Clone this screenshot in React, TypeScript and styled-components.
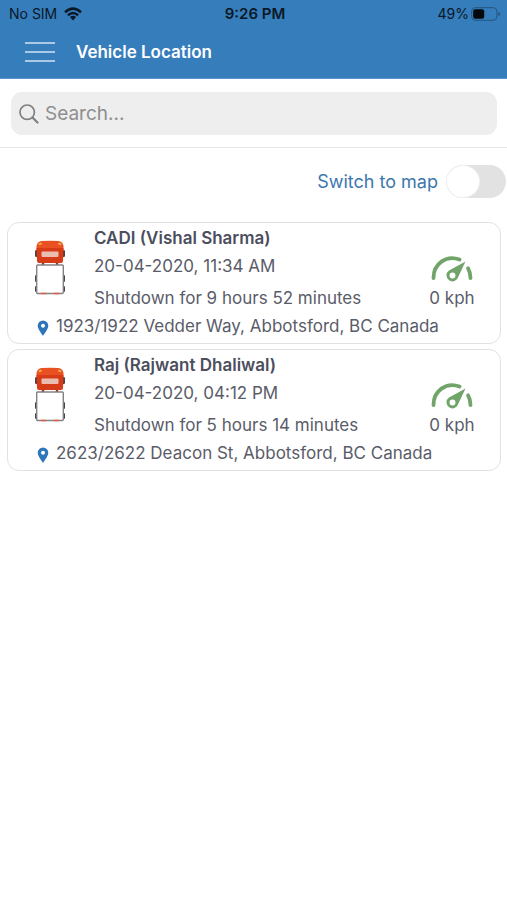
import React, { useState } from "react";
import styled, { createGlobalStyle } from "styled-components";

const GlobalStyle = createGlobalStyle`
  *, *::before, *::after { box-sizing: border-box; }
  body {
    margin: 0;
    background: #ffffff;
    color: #5a5c69;
    font-family: Inter, "Liberation Sans", sans-serif;
    font-size: 17px;
  }
`;

const Header = styled.header`
  background: #367dbc;
  padding-bottom: 3px;
  border-bottom: 1px solid #5b96cb;
`;

const StatusBar = styled.div`
  display: grid;
  grid-template-columns: 1fr auto 1fr;
  align-items: center;
  height: 28px;
  padding: 0 6px 0 9px;
  color: #0b1826;
  font-size: 14px;
  line-height: 20px;
`;

const StatusGroup = styled.div<{ $end?: boolean }>`
  display: flex;
  align-items: center;
  justify-content: ${(p) => (p.$end ? "flex-end" : "flex-start")};
  gap: ${(p) => (p.$end ? 2 : 7)}px;
`;

const Clock = styled.time`
  font-size: 15px;
  font-weight: 600;
`;

const NavBar = styled.div`
  display: flex;
  align-items: center;
  gap: 20px;
  height: 47px;
  padding: 0 24px;
`;

const MenuButton = styled.button`
  display: flex;
  padding: 0;
  border: 0;
  background: none;
  cursor: pointer;
`;

const Title = styled.h1`
  margin: 0;
  color: #ffffff;
  font-size: 17px;
  font-weight: 600;
  line-height: 24px;
`;

const SearchArea = styled.div`
  padding: 13px 10px 12px 11px;
  border-bottom: 1px solid #e6e6e6;
`;

const SearchBox = styled.label`
  display: flex;
  align-items: center;
  gap: 6px;
  height: 43px;
  padding: 0 8px;
  border-radius: 11px;
  background: #eeeeee;
`;

const SearchInput = styled.input`
  flex: 1;
  min-width: 0;
  padding: 0;
  border: 0;
  outline: 0;
  background: none;
  color: #5a5c69;
  font: inherit;
  font-size: 19px;
  line-height: 24px;
  &::placeholder { color: #8e8e90; opacity: 1; }
`;

const SwitchRow = styled.label`
  display: flex;
  align-items: center;
  justify-content: flex-end;
  gap: 8px;
  padding: 17px 1px 24px;
  color: #3c78ad;
  font-size: 18px;
  line-height: 24px;
`;

const Switch = styled.input`
  appearance: none;
  display: flex;
  width: 60px;
  height: 33px;
  margin: 0;
  padding: 1px;
  border-radius: 17px;
  background: #e2e2e2;
  cursor: pointer;
  &::before {
    content: "";
    width: 32px;
    border-radius: 50%;
    background: #ffffff;
    box-shadow: 0 0 0 1px #f1f1f1;
  }
  &:checked { background: #367dbc; justify-content: flex-end; }
`;

const VehicleList = styled.ul`
  display: flex;
  flex-direction: column;
  gap: 5px;
  margin: 0;
  padding: 0 6px 0 7px;
  list-style: none;
`;

const Card = styled.li`
  padding: 1px 0 3px;
  border: 1px solid #e2e2e4;
  border-radius: 12px;
  line-height: 28px;
`;

const Summary = styled.div`
  display: grid;
  grid-template-columns: 86px 1fr 96px;
`;

const TruckCell = styled.div`
  display: flex;
  align-items: center;
  justify-content: center;
  padding: 0 2px 2px 0;
`;

const Details = styled.div`
  display: flex;
  flex-direction: column;
`;

const Name = styled.strong`
  color: #4c4e5e;
  font-weight: 600;
`;

const State = styled.span`
  margin-top: 4px;
`;

const Speed = styled.div`
  display: flex;
  flex-direction: column;
  align-items: center;
  justify-content: flex-end;
  gap: 2px;
`;

const Address = styled.div`
  display: flex;
  align-items: center;
  gap: 7px;
  padding-left: 29px;
`;

const Pin = styled.svg`
  flex: none;
  margin-top: 3px;
`;

const WifiIcon = () => (
  <svg width="18" height="14" viewBox="0 0 18 14" aria-hidden="true">
    <g fill="none" stroke="#0b1826" strokeWidth="2.5">
      <path d="M1 5.2Q9-2 17 5.2" />
      <path d="M3.9 8.3Q9 3.8 14.1 8.3" />
    </g>
    <path d="M5.9 10.1Q9 7.6 12.1 10.1L9 13.5Z" fill="#0b1826" />
  </svg>
);

const BatteryIcon = () => (
  <svg width="30" height="14" viewBox="0 0 30 14" aria-hidden="true">
    <rect x="0.7" y="0.7" width="25.2" height="12.6" rx="3.5" fill="none" stroke="#24567f" />
    <rect x="2.2" y="2.2" width="11" height="9.6" rx="2" fill="#03080d" />
    <path d="M27.3 4.7Q29.3 5.4 29.3 7T27.3 9.3Z" fill="#24567f" />
  </svg>
);

const MenuIcon = () => (
  <svg width="32" height="22" viewBox="0 0 32 22" aria-hidden="true">
    <path d="M1 2H31M1 11H31M1 20H31" stroke="#cfe2f3" strokeWidth="1.6" />
  </svg>
);

const SearchIcon = () => (
  <svg width="20" height="20" viewBox="0 0 20 20" aria-hidden="true">
    <g fill="none" stroke="#808082" strokeLinecap="round">
      <circle cx="8.2" cy="8.2" r="7.2" strokeWidth="1.7" />
      <path d="M13.5 13.5L18.5 18.5" strokeWidth="2.2" />
    </g>
  </svg>
);

const TruckIcon = () => (
  <svg width="32" height="56" viewBox="0 0 32 56" aria-hidden="true">
    <g fill="#4a4443">
      <rect x="1" y="11" width="3" height="7" rx="1.2" />
      <rect x="28" y="11" width="3" height="7" rx="1.2" />
      <rect x="1" y="36" width="3" height="7" rx="1.2" />
      <rect x="28" y="36" width="3" height="7" rx="1.2" />
      <rect x="1" y="47" width="3" height="6" rx="1.2" />
      <rect x="28" y="47" width="3" height="6" rx="1.2" />
    </g>
    <path d="M9 23V26M23 23V26" stroke="#8e3a2c" strokeWidth="2.4" />
    <path d="M2.5 12V7Q3.5 2.4 7.5 2.1Q16 1.5 24.5 2.1Q28.500 2.4 29.500 7V12Z" fill="#e95123" />
    <path d="M2.5 9H29.5L29 22Q29 24 27 24H5Q3 24 3 22Z" fill="#d63c18" />
    <path d="M5.500 5.200L7 4.600M26.500 5.200L25 4.600" stroke="#f9a744" strokeWidth="2" strokeLinecap="round" />
    <rect x="7.500" y="12.500" width="17" height="5.500" rx="1" fill="#ebbdb0" />
    <rect x="2.700" y="26" width="26.600" height="28.500" rx="1" fill="#ffffff" stroke="#858180" strokeWidth="1.400" />
    <path d="M7 54.500H12M20 54.500H25" stroke="#e65b49" strokeWidth="1.600" />
  </svg>
);

const GaugeIcon = () => (
  <svg width="42" height="26" viewBox="0 0 42 26" aria-hidden="true">
    <g fill="none" stroke="#70a468" strokeWidth="3.800" strokeLinecap="round">
      <path d="M2.500 22C2.500 8 15-1.500 28.500 3.500" />
      <path d="M37 12.300Q39.500 16.500 39.500 22" />
    </g>
    <path
      d="M34.500 5.500L27.300 20.800A6 6 0 1 1 18 14.500ZM21.500 16.500A3 3 0 1 0 21.500 22.500A3 3 0 1 0 21.500 16.500Z"
      fill="#70a468"
      fillRule="evenodd"
    />
  </svg>
);

const PinIcon = () => (
  <Pin width="12" height="16" viewBox="0 0 12 16" aria-hidden="true">
    <path
      d="M6 0.500A5.300 5.300 0 0 0 0.700 5.800C0.700 9.500 6 15.700 6 15.700S11.300 9.500 11.300 5.800A5.300 5.300 0 0 0 6 0.500ZM6 3.800A2 2 0 1 1 6 7.800A2 2 0 1 1 6 3.800Z"
      fill="#2d76b9"
      fillRule="evenodd"
    />
  </Pin>
);

interface Vehicle {
  name: string;
  updated: string;
  state: string;
  speed: string;
  address: string;
}

const vehicles: Vehicle[] = [
  {
    name: "CADI (Vishal Sharma)",
    updated: "20-04-2020, 11:34 AM",
    state: "Shutdown for 9 hours 52 minutes",
    speed: "0 kph",
    address: "1923/1922 Vedder Way, Abbotsford, BC Canada",
  },
  {
    name: "Raj (Rajwant Dhaliwal)",
    updated: "20-04-2020, 04:12 PM",
    state: "Shutdown for 5 hours 14 minutes",
    speed: "0 kph",
    address: "2623/2622 Deacon St, Abbotsford, BC Canada",
  },
];

const VehicleCard = ({ vehicle }: { vehicle: Vehicle }) => (
  <Card>
    <Summary>
      <TruckCell>
        <TruckIcon />
      </TruckCell>
      <Details>
        <Name>{vehicle.name}</Name>
        <span>{vehicle.updated}</span>
        <State>{vehicle.state}</State>
      </Details>
      <Speed>
        <GaugeIcon />
        <span>{vehicle.speed}</span>
      </Speed>
    </Summary>
    <Address>
      <PinIcon />
      <span>{vehicle.address}</span>
    </Address>
  </Card>
);

export default function App() {
  const [query, setQuery] = useState("");
  const [showMap, setShowMap] = useState(false);
  const shown = vehicles.filter((v) => v.name.toLowerCase().includes(query.toLowerCase()));

  return (
    <>
      <GlobalStyle />
      <Header>
        <StatusBar>
          <StatusGroup>
            <span>No SIM</span>
            <WifiIcon />
          </StatusGroup>
          <Clock>9:26 PM</Clock>
          <StatusGroup $end>
            <span>49%</span>
            <BatteryIcon />
          </StatusGroup>
        </StatusBar>
        <NavBar>
          <MenuButton type="button" aria-label="Menu">
            <MenuIcon />
          </MenuButton>
          <Title>Vehicle Location</Title>
        </NavBar>
      </Header>
      <main>
        <SearchArea>
          <SearchBox>
            <SearchIcon />
            <SearchInput
              type="text"
              aria-label="Search"
              placeholder="Search..."
              value={query}
              onChange={(e) => setQuery(e.target.value)}
            />
          </SearchBox>
        </SearchArea>
        <SwitchRow>
          <span>Switch to map</span>
          <Switch
            type="checkbox"
            role="switch"
            checked={showMap}
            onChange={(e) => setShowMap(e.target.checked)}
          />
        </SwitchRow>
        <VehicleList>
          {shown.map((v) => (
            <VehicleCard key={v.name} vehicle={v} />
          ))}
        </VehicleList>
      </main>
    </>
  );
}
